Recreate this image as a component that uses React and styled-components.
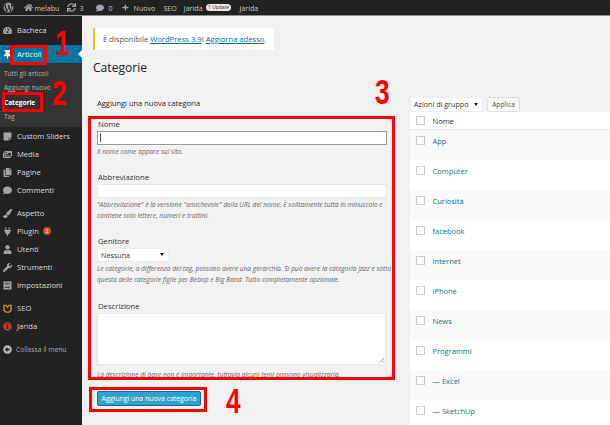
import React from "react";
import styled, { createGlobalStyle } from "styled-components";
import {
  FaWordpress, FaHome, FaSync, FaComment, FaPlus, FaTachometerAlt, FaThumbtack, FaImages, FaCopy,
  FaPaintBrush, FaPlug, FaUser, FaWrench, FaStickyNote, FaInfoCircle, FaArrowAltCircleLeft,
} from "react-icons/fa";

const Global = createGlobalStyle`
  html, body { margin: 0; padding: 0; background: #f1f1f1; }
  * { box-sizing: border-box; }
  body { font-family: "Open Sans", "Noto Sans", sans-serif; }
`;

const Page = styled.div`
  position: relative; width: 610px; height: 425px; overflow: hidden; background: #f1f1f1;
  display: flex; flex-direction: column;
`;
const TopBar = styled.header`
  height: 16px; flex: none; background: #222; border-bottom: 1px solid #8f8f8f;
  display: flex; align-items: center; padding-left: 3px; color: #c8c8c8; font-size: 7.1px;
`;
const TopItem = styled.span`
  display: inline-flex; align-items: center; gap: ${p => p.$gap ?? 3}px; margin-right: ${p => p.$mr ?? 7}px; white-space: nowrap;
  svg { color: #a0a5aa; }
`;
const UpdatePill = styled.span`
  background: #e8e8e8; color: #333; border-radius: 5px; font-size: 4.9px; padding: 0 2.5px; line-height: 7.5px;
`;
const Body = styled.div`flex: 1; display: flex; min-height: 0;`;
const Sidebar = styled.nav`
  width: 82px; flex: none; background: #222; color: #e6e6e6; padding-top: 5px; display: flex; flex-direction: column;
`;
const MenuRow = styled.div`
  position: relative; height: 18px; display: flex; align-items: center; padding-left: 3px; gap: 3px;
  font-size: 7.6px; color: ${p => (p.$active ? "#fff" : "#dcdcdc")}; flex: none;
  background: ${p => (p.$active ? "#0074a2" : "transparent")};
  margin-top: ${p => p.$gap || 0}px;
  svg { flex: none; color: ${p => p.$iconColor || (p.$active ? "#fff" : "#a0a5aa")}; width: 9px; height: 9px; margin-right: 2px; }
`;
const ActiveArrow = styled.i`
  position: absolute; right: 0; top: 5px; border: 4px solid transparent; border-right-color: #f1f1f1; border-left: 0;
`;
const SubMenu = styled.div`background: #333; padding: 4px 0 4px 4px; height: 64px; display: flex; flex-direction: column; flex: none;`;
const SubItem = styled.div`
  height: 14.4px; line-height: 14.4px; font-size: 6.5px; color: ${p => (p.$current ? "#fff" : "#b4b9be")};
  font-weight: ${p => (p.$current ? 700 : 400)};
`;
const Badge = styled.span`
  display: inline-flex; width: 8px; height: 8px; border-radius: 50%; background: #d54e21; color: #fff;
  font-size: 5px; align-items: center; justify-content: center; margin-left: 1px;
`;
const Collapse = styled(MenuRow)`font-size: 6.7px; color: #a8a8a8; margin-top: 5px; gap: 2px;`;

const Main = styled.main`flex: 1; min-width: 0; padding: 12px 0 0 11px; display: flex; flex-direction: column;`;
const Notice = styled.div`
  width: 181px; height: 22px; background: #fff; border-left: 2px solid #ffba00; display: flex; align-items: center;
  padding-left: 8px; font-size: 7.65px; color: #555; flex: none;
`;
const Link = styled.a`color: #0074a2; text-decoration: underline;`;
const Title = styled.h1`margin: 8px 0 0; font-size: 12.1px; font-weight: 400; color: #222; line-height: 19px;`;
const Columns = styled.div`display: grid; grid-template-columns: 317px 1fr; margin-top: 20px;`;
const FormCol = styled.section`padding-left: 4px; display: flex; flex-direction: column;`;
const FormTitle = styled.h3`margin: 0 0 9px; font-size: 7.5px; font-weight: 500; color: #222; line-height: 13px; height: 13px;`;
const Field = styled.div`display: flex; flex-direction: column; flex: none; height: ${p => p.$h}px;`;
const Label = styled.label`font-size: 7.7px; color: #333; line-height: 11px; height: 11.5px; padding-left: 1px;`;
const TextInput = styled.div`
  width: 290px; height: 14.5px; background: #fff; flex: none; display: flex; align-items: center; padding-left: 2px;
  border: 1px solid ${p => (p.$focus ? "#999" : "#e8e8e8")};
`;
const Caret = styled.i`width: 1px; height: 9px; background: #555;`;
const Hint = styled.p`
  margin: 2px 0 0; font-size: 6.65px; font-style: italic; color: #666; line-height: 10.5px; width: 296px; white-space: nowrap;
`;
const SelectBox = styled.div`
  width: ${p => p.$w}px; height: 14.5px; background: #fff; border: 1px solid #ececec; flex: none; display: flex; align-items: center;
  justify-content: space-between; padding: 0 3px; font-size: 7.2px; color: #333;
  &::after { content: ""; border: 2px solid transparent; border-top: 3px solid #111; border-bottom: 0; margin-right: 1px; }
`;
const TextArea = styled.div`
  position: relative; width: 289px; height: 52px; background: #fff; border: 1px solid #e8e8e8; flex: none;
  &::after { content: ""; position: absolute; right: 1px; bottom: 1px; width: 5px; height: 5px;
    background: repeating-linear-gradient(135deg, transparent 0 1px, #999 1px 2px); clip-path: polygon(100% 0, 100% 100%, 0 100%); }
`;
const Submit = styled.button`
  width: 104px; height: 15px; margin-top: 10px; background: #2ea2cc; border: 1px solid #0074a2; border-radius: 2px; color: #fff;
  font: 400 6.9px "Open Sans", sans-serif; padding: 0; flex: none;
`;
const ListCol = styled.section`display: flex; flex-direction: column;`;
const Actions = styled.div`display: flex; gap: 4px; height: 15px; flex: none;`;
const ApplyBtn = styled.button`
  width: 33px; height: 15px; background: #f7f7f7; border: 1px solid #ddd; border-radius: 2px; color: #555;
  font: 400 6.7px "Open Sans", sans-serif; padding: 0;
`;
const Table = styled.div`display: flex; flex-direction: column; background: #fff;`;
const Row = styled.div`
  height: ${p => p.$head ? 18 : 30}px; flex: none; display: flex; gap: 8px; padding: ${p => p.$head ? 4 : 6}px 0 0 6px;
  background: ${p => (p.$odd ? "#f9f9f9" : "#fff")}; border-bottom: ${p => p.$head ? "1px solid #e8e8e8" : 0};
  font-size: 7.5px; color: ${p => (p.$head ? "#333" : "#0074a2")}; line-height: 10px;
`;
const Check = styled.i`width: 8.5px; height: 8.5px; background: #fff; border: 1px solid #ccc; flex: none;`;

const RedBox = styled.div`
  position: absolute; border: 3px solid #f00; pointer-events: none;
  left: ${p => p.$x}px; top: ${p => p.$y}px; width: ${p => p.$w}px; height: ${p => p.$h}px;
`;
const Num = styled.span`
  position: absolute; left: ${p => p.$x}px; top: ${p => p.$y}px; color: #f00; font: 700 35px/35px "Liberation Sans", sans-serif;
  transform: scaleX(.75); transform-origin: left top;
`;
const ClipHint = styled(Hint)`height: 9px; overflow: hidden; margin-top: 5px;`;

const SettingsIcon = () => (
  <svg viewBox="0 0 10 10">
    <rect x=".5" y=".5" width="9" height="9" fill="currentColor" />
    <path d="M2 3h2M6 3h2M2 7h4M7.5 7H8M4.5 1.8v2.4M6.5 5.8v2.4" stroke="#222" strokeWidth="1" fill="none" />
  </svg>
);
const SeoIcon = () => (
  <svg viewBox="0 0 10 10">
    <path d="M1 1.5h2.5L5 3.5l1.5-2H9v5.5L7 9H3L1 7z" fill="none" stroke="currentColor" strokeWidth="1.5" />
  </svg>
);

const menuB = [["Custom Sliders", FaStickyNote], ["Media", FaImages], ["Pagine", FaCopy], ["Commenti", FaComment]];
const names = ["App", "Computer", "Curiosità", "facebook", "Internet", "iPhone", "News", "Programmi", "— Excel", "— SketchUp"];

export default function App() {
  return (
    <Page>
      <Global />
      <TopBar>
        <TopItem $mr={10}><FaWordpress size={11} /></TopItem>
        <TopItem $mr={8} $gap={1.5}><FaHome size={9} />melabu</TopItem>
        <TopItem $mr={12}><FaSync size={9} />3</TopItem>
        <TopItem $mr={9} $gap={5}><FaComment size={8} />0</TopItem>
        <TopItem $mr={8} $gap={5}><FaPlus size={7} />Nuovo</TopItem>
        <TopItem>SEO</TopItem>
        <TopItem $mr={8}>Jarida<UpdatePill>1 Update</UpdatePill></TopItem>
        <TopItem>Jarida</TopItem>
      </TopBar>
      <Body>
        <Sidebar>
          <MenuRow><FaTachometerAlt />Bacheca</MenuRow>
          <MenuRow $active $gap={6}><FaThumbtack />Articoli<ActiveArrow /></MenuRow>
          <SubMenu>
            <SubItem>Tutti gli articoli</SubItem>
            <SubItem>Aggiungi nuovo</SubItem>
            <SubItem $current>Categorie</SubItem>
            <SubItem>Tag</SubItem>
          </SubMenu>
          {menuB.map(([t, I]) => <MenuRow key={t}><I />{t}</MenuRow>)}
          <MenuRow $gap={5}><FaPaintBrush />Aspetto</MenuRow>
          <MenuRow><FaPlug />Plugin<Badge>2</Badge></MenuRow>
          <MenuRow><FaUser />Utenti</MenuRow>
          <MenuRow><FaWrench />Strumenti</MenuRow>
          <MenuRow><SettingsIcon />Impostazioni</MenuRow>
          <MenuRow $gap={5} $iconColor="#d98a1f"><SeoIcon />SEO</MenuRow>
          <MenuRow $iconColor="#c0392b"><FaInfoCircle />Jarida</MenuRow>
          <Collapse $iconColor="#b4b9be"><FaArrowAltCircleLeft />Collassa il menu</Collapse>
        </Sidebar>
        <Main>
          <Notice><span>È disponibile <Link>WordPress 3.9</Link>! <Link>Aggiorna adesso</Link>.</span></Notice>
          <Title>Categorie</Title>
          <Columns>
            <FormCol>
              <FormTitle>Aggiungi una nuova categoria</FormTitle>
              <Field $h={53}>
                <Label>Nome</Label>
                <TextInput $focus><Caret /></TextInput>
                <Hint>Il nome come appare sul sito.</Hint>
              </Field>
              <Field $h={64}>
                <Label>Abbreviazione</Label>
                <TextInput />
                <Hint>"Abbreviazione" è la versione "amichevole" della URL del nome. È solitamente tutta in minuscolo e<br />contiene solo lettere, numeri e trattini.</Hint>
              </Field>
              <Field $h={65}>
                <Label>Genitore</Label>
                <SelectBox $w={72}>Nessuna</SelectBox>
                <Hint>Le categorie, a differenza dei tag, possono avere una gerarchia. Si può avere la categoria Jazz e sotto<br />questa delle categorie figlie per Bebop e Big Band. Tutto completamente opzionale.</Hint>
              </Field>
              <Field $h={80}>
                <Label>Descrizione</Label>
                <TextArea />
                <ClipHint>La descrizione di base non è importante, tuttavia alcuni temi possono visualizzarla.</ClipHint>
              </Field>
              <Submit>Aggiungi una nuova categoria</Submit>
            </FormCol>
            <ListCol>
              <Actions>
                <SelectBox $w={73}>Azioni di gruppo</SelectBox>
                <ApplyBtn>Applica</ApplyBtn>
              </Actions>
              <Table>
                <Row $head><Check />Nome</Row>
                {names.map((n, i) => <Row key={n} $odd={i % 2 === 0}><Check />{n}</Row>)}
              </Table>
            </ListCol>
          </Columns>
        </Main>
      </Body>
      <RedBox $x={10} $y={45} $w={37} $h={20} />
      <RedBox $x={2} $y={92} $w={41} $h={20} />
      <RedBox $x={88} $y={116} $w={307} $h={264} />
      <RedBox $x={89} $y={387} $w={118} $h={25} />
      <Num $x={55} $y={25}>1</Num>
      <Num $x={52} $y={75}>2</Num>
      <Num $x={375} $y={74}>3</Num>
      <Num $x={226} $y={383}>4</Num>
    </Page>
  );
}
